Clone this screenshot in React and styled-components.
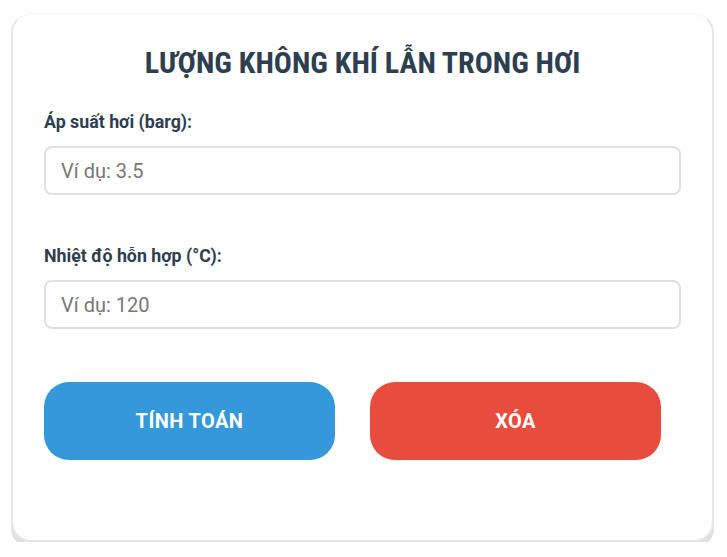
import React from "react";
import styled, { createGlobalStyle } from "styled-components";

const Global = createGlobalStyle`
  html, body { margin: 0; padding: 0; background: #ffffff; }
  body { font-family: Roboto, "Noto Sans", sans-serif; }
  * { box-sizing: border-box; }
`;

const Page = styled.div`
  padding: 13px 13px 0 11px;
`;

const Card = styled.div`
  background: #ffffff;
  border: 2px solid;
  border-color: #f9f9f9 #e6e6e6 #e6e6e6 #e6e6e6;
  border-radius: 20px;
  box-shadow: 0 6px 0 #e0e0e0;
  padding: 28px 31px 80px 31px;
`;

const Title = styled.h1`
  margin: 0 0 29px 0;
  text-align: center;
  font-family: "Roboto Condensed", "DejaVu Sans Condensed", sans-serif;
  font-stretch: condensed;
  font-weight: 700;
  font-size: 30px;
  line-height: 40px;
  color: #2c3e50;
`;

const Group = styled.div`
  margin-bottom: 51px;
`;

const Label = styled.label`
  display: block;
  font-family: Roboto, sans-serif;
  font-weight: 700;
  font-size: 17.8px;
  line-height: 20px;
  color: #2c3e50;
  margin-bottom: 14px;
`;

const Input = styled.input`
  display: block;
  width: 100%;
  height: 49px;
  border: 2px solid #e0e0e0;
  border-radius: 8px;
  padding: 0 15px;
  font-family: Roboto, sans-serif;
  font-size: 20px;
  color: #333;
  outline: none;
  &::placeholder { color: #777777; }
`;

const Buttons = styled.div`
  display: flex;
  gap: 35px;
  padding-right: 20px;
  margin-top: 53px;
`;

const Button = styled.button`
  flex: 1;
  height: 78px;
  border: none;
  border-radius: 25px;
  background: ${(p) => p.$color};
  color: #ffffff;
  font-family: Roboto, sans-serif;
  font-weight: 700;
  font-size: 20px;
  letter-spacing: 0.4px;
  cursor: pointer;
`;

export default function App() {
  return (
    <>
      <Global />
      <Page>
        <Card>
          <Title>LƯỢNG KHÔNG KHÍ LẪN TRONG HƠI</Title>
          <Group>
            <Label>Áp suất hơi (barg):</Label>
            <Input placeholder="Ví dụ: 3.5" />
          </Group>
          <Group>
            <Label>Nhiệt độ hỗn hợp (°C):</Label>
            <Input placeholder="Ví dụ: 120" />
          </Group>
          <Buttons>
            <Button $color="#3498db">TÍNH TOÁN</Button>
            <Button $color="#e74c3c">XÓA</Button>
          </Buttons>
        </Card>
      </Page>
    </>
  );
}
